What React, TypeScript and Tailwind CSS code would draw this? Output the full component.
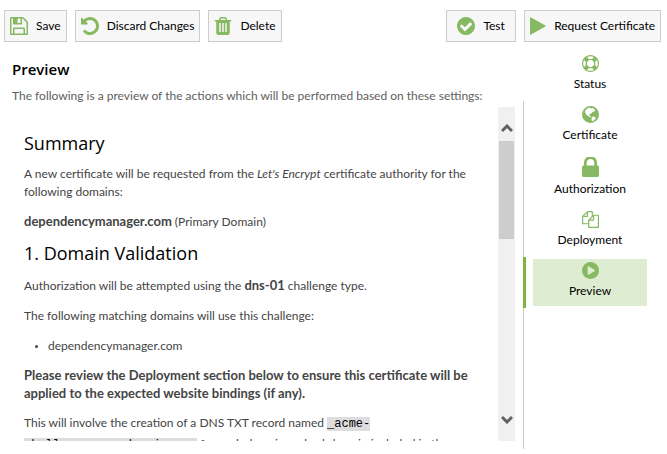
import React from "react";

const icons = {
  save: { box: "128 128 1536 1536", d: "M512 1536h768v-384h-768v384zm896 0h128v-896q0-14-10-38.5t-20-34.5l-281-281q-10-10-34-20t-39-10v416q0 40-28 68t-68 28h-576q-40 0-68-28t-28-68v-416h-128v1280h128v-416q0-40 28-68t68-28h832q40 0 68 28t28 68v416zm-384-928v-320q0-13-9.5-22.5t-22.5-9.5h-192q-13 0-22.5 9.5t-9.5 22.5v320q0 13 9.5 22.5t22.5 9.5h192q13 0 22.5-9.5t9.5-22.5zm640 32v928q0 40-28 68t-68 28h-1344q-40 0-68-28t-28-68v-1344q0-40 28-68t68-28h928q40 0 88 20t76 48l280 280q28 28 48 76t20 88z" },
  undo: { box: "128 128 1536 1536", d: "M1664 896q0 156-61 298t-164 245-245 164-298 61q-172 0-327-72.5t-264-204.5q-7-10-6.5-22.5t8.5-20.5l137-138q10-9 25-9 16 2 23 12 73 95 179 147t225 52q104 0 198.5-40.5t163.5-109.5 109.5-163.5 40.5-198.5-40.5-198.5-109.5-163.5-163.5-109.5-198.5-40.5q-98 0-188 35.5t-160 101.5l137 138q31 30 14 69-17 40-59 40h-448q-26 0-45-19t-19-45v-448q0-42 40-59 39-17 69 14l130 129q107-101 244.5-156.5t284.5-55.5q156 0 298 61t245 164 164 245 61 298z" },
  trash: { box: "128 128 1536 1536", d: "M704 1376v-704q0-14-9-23t-23-9h-64q-14 0-23 9t-9 23v704q0 14 9 23t23 9h64q14 0 23-9t9-23zm256 0v-704q0-14-9-23t-23-9h-64q-14 0-23 9t-9 23v704q0 14 9 23t23 9h64q14 0 23-9t9-23zm256 0v-704q0-14-9-23t-23-9h-64q-14 0-23 9t-9 23v704q0 14 9 23t23 9h64q14 0 23-9t9-23zm-544-992h448l-48-117q-7-9-17-11h-317q-10 2-17 11zm928 32v64q0 14-9 23t-23 9h-96v948q0 83-47 143.5t-113 60.5h-832q-66 0-113-58.5t-47-141.5v-952h-96q-14 0-23-9t-9-23v-64q0-14 9-23t23-9h309l70-167q15-37 54-63t79-26h320q40 0 79 26t54 63l70 167h309q14 0 23 9t9 23z" },
  check: { box: "128 128 1536 1536", d: "M1412 734q0-28-18-46l-91-90q-19-19-45-19t-45 19l-408 407-226-226q-19-19-45-19t-45 19l-91 90q-18 18-18 46 0 27 18 45l362 362q19 19 45 19 27 0 46-19l543-543q18-18 18-45zm252 162q0 209-103 385.5t-279.5 279.5-385.5 103-385.5-103-279.5-279.5-103-385.5 103-385.5 279.5-279.5 385.5-103 385.5 103 279.5 279.5 103 385.5z" },
  play: { box: "192 118 1408 1556", d: "M1576 927l-1328 738q-23 13-39.5 3t-16.5-36v-1472q0-26 16.5-36t39.5 3l1328 738q23 13 23 31t-23 31z" },
  ring: { box: "0 0 1792 1792", d: "M896 0q182 0 348 71t286 191 191 286 71 348-71 348-191 286-286 191-348 71-348-71-286-191-191-286-71-348 71-348 191-286 286-191 348-71zm0 128q-190 0-361 90l194 194q82-28 167-28t167 28l194-194q-171-90-361-90zm-678 1129l194-194q-28-82-28-167t28-167l-194-194q-90 171-90 361t90 361zm678 407q190 0 361-90l-194-194q-82 28-167 28t-167-28l-194 194q171 90 361 90zm0-384q159 0 271.5-112.5t112.5-271.5-112.5-271.5-271.5-112.5-271.5 112.5-112.5 271.5 112.5 271.5 271.5 112.5zm484-217l194 194q90-171 90-361t-90-361l-194 194q28 82 28 167t-28 167z" },
  globe: { box: "0 0 34 34", d: "M17 0a17 17 0 1 0 0 34a17 17 0 1 0 0-34zM11 5l4-2 3 2 4-1 4 4-1 3-4 1-2 3-4 1 0 3 3 2 0 2-4-2-5-3-3-6 1-4zM20 22l4-1 4 3-3 4-5 3-1-5z" },
  lock: { box: "320 192 1152 1344", d: "M640 768h512v-192q0-106-75-181t-181-75-181 75-75 181v192zm832 96v576q0 40-28 68t-68 28h-960q-40 0-68-28t-28-68v-576q0-40 28-68t68-28h32v-192q0-184 132-316t316-132 316 132 132 316v192h32q40 0 68 28t28 68z" },
  files: { box: "0 0 1792 1792", d: "M1696 384q40 0 68 28t28 68v1216q0 40-28 68t-68 28h-960q-40 0-68-28t-28-68v-288h-544q-40 0-68-28t-28-68v-672q0-40 20-88t48-76l408-408q28-28 76-48t88-20h416q40 0 68 28t28 68v328q68-40 128-40h416zm-544 213l-299 299h299v-299zm-640-384l-299 299h299v-299zm196 647l316-316v-416h-384v416q0 40-28 68t-68 28h-416v640h512v-256q0-40 20-88t48-76zm956 804v-1152h-384v416q0 40-28 68t-68 28h-416v640h896z" },
  playCircle: { box: "128 128 1536 1536", d: "M896 128q209 0 385.5 103t279.5 279.5 103 385.5-103 385.5-279.5 279.5-385.5 103-385.5-103-279.5-279.5-103-385.5 103-385.5 279.5-279.5 385.5-103zm384 823q32-18 32-55t-32-55l-544-320q-31-19-64-1-32 19-32 56v640q0 37 32 56 16 8 32 8 17 0 32-9z" },
};

type IconName = keyof typeof icons;

function Icon({ name, className }: { name: IconName; className: string }) {
  return (
    <svg viewBox={icons[name].box} className={`shrink-0 fill-[#87b862] ${className}`} aria-hidden="true">
      <path fillRule="evenodd" d={icons[name].d} />
    </svg>
  );
}

function ToolButton({ icon, label, size = "size-[18px]" }: { icon: IconName; label: string; size?: string }) {
  return (
    <button className="flex h-8 items-center gap-2 border border-[#cccccc] bg-[#f7f7f7] px-[5px] whitespace-nowrap text-black">
      <Icon name={icon} className={size} />
      {label}
    </button>
  );
}

function Strong({ children }: { children: React.ReactNode }) {
  return <strong className="text-[13px] leading-4 font-bold">{children}</strong>;
}

const sections: { icon: IconName; label: string; size: string }[] = [
  { icon: "ring", label: "Status", size: "size-[17px]" },
  { icon: "globe", label: "Certificate", size: "size-[17px]" },
  { icon: "lock", label: "Authorization", size: "h-5 w-[17px]" },
  { icon: "files", label: "Deployment", size: "size-[17px]" },
  { icon: "playCircle", label: "Preview", size: "size-[17px]" },
];

export default function App() {
  return (
    <div className="flex h-screen flex-col bg-white font-['Lato','Open_Sans',sans-serif] text-xs text-[#444444]">
      <header className="flex gap-2 pt-[10px] pr-[6px] pl-1">
        <ToolButton icon="save" label="Save" />
        <ToolButton icon="undo" label="Discard Changes" />
        <ToolButton icon="trash" label="Delete" />
        <div className="grow" />
        <div className="grid min-w-[70px] [&>button]:justify-center">
          <ToolButton icon="check" label="Test" />
        </div>
        <ToolButton icon="play" label="Request Certificate" size="h-[18px] w-4" />
      </header>
      <div className="flex min-h-0 grow pr-[10px]">
        <main className="flex min-w-0 grow flex-col pt-[17px] pr-2 pb-[13px] pl-3">
          <h1 className="font-['Open_Sans',sans-serif] text-[15px] leading-5 font-semibold text-black">Preview</h1>
          <p className="mt-2 leading-[18px] whitespace-nowrap text-[#606060]">
            The following is a preview of the actions which will be performed based on these settings:
          </p>
          <div className="mt-[2px] flex min-h-0 grow">
            <article className="min-w-0 grow overflow-hidden pt-6 pr-6 pl-3 leading-[18px]">
              <h2 className="font-['Open_Sans',sans-serif] text-lg leading-6 text-black">Summary</h2>
              <p className="mt-[10px]">
                A new certificate will be requested from the <em>Let's Encrypt</em> certificate authority for the following domains:
              </p>
              <p className="mt-3"><Strong>dependencymanager.com</Strong> (Primary Domain)</p>
              <h2 className="mt-[10px] font-['Open_Sans',sans-serif] text-lg leading-6 text-black">1. Domain Validation</h2>
              <p className="mt-3">Authorization will be attempted using the <Strong>dns-01</Strong> challenge type.</p>
              <p className="mt-3">The following matching domains will use this challenge:</p>
              <ul className="mt-3 list-disc pl-6 marker:text-[9px]"><li>dependencymanager.com</li></ul>
              <p className="mt-3">
                <Strong>Please review the Deployment section below to ensure this certificate will be applied to the expected website bindings (if any).</Strong>
              </p>
              <p className="mt-[10px] leading-5">
                This will involve the creation of a DNS TXT record named{" "}
                <code className="bg-[#dddddd] font-['Liberation_Mono',monospace] text-black">_acme-challenge.yourdomain.com</code> for each domain and subdomain included in the certificate.
              </p>
            </article>
            <div className="flex w-[17px] shrink-0 flex-col items-center bg-[#f0f0f0] text-[#606060]">
              <button aria-label="Scroll up" className="flex h-[34px] items-end pb-2">
                <svg viewBox="0 0 12 9" className="h-[9px] w-3 fill-none stroke-current stroke-[3]"><path d="M1 7l5-5 5 5" /></svg>
              </button>
              <div className="h-[98px] w-[15px] bg-[#cdcdcd]" />
              <div className="grow" />
              <button aria-label="Scroll down" className="flex h-[26px] items-start">
                <svg viewBox="0 0 12 9" className="h-[9px] w-3 fill-none stroke-current stroke-[3]"><path d="M1 2l5 5 5-5" /></svg>
              </button>
            </div>
          </div>
        </main>
        <nav className="flex w-[134px] shrink-0 flex-col pt-2 pb-[5px]">
          {sections.map((s, i) => (
            <button
              key={s.label}
              className={`shrink-0 py-[2px] pr-[10px] text-black ${i === 4 ? "border-l-[3px] border-[#7db63f] pl-[7px]" : i > 0 ? "border-l border-[#cccccc] pl-[9px]" : "pl-[10px]"}`}
            >
              <span className={`flex flex-col items-center gap-[2px] pt-[3px] pb-[5px] ${i === 4 ? "bg-[#deecd2]" : ""}`}>
                <Icon name={s.icon} className={s.size} />
                <span className="leading-5">{s.label}</span>
              </span>
            </button>
          ))}
          <div className="grow border-l border-[#cccccc]" />
        </nav>
      </div>
    </div>
  );
}
